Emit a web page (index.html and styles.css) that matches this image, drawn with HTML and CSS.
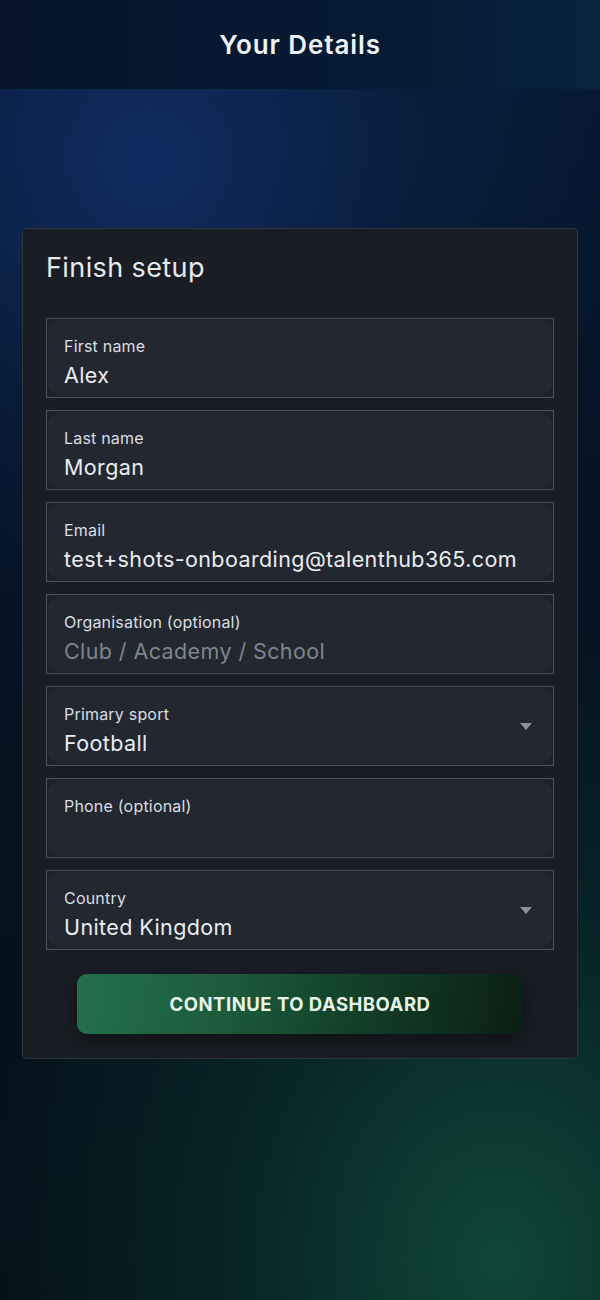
FILE: index.html
```html
<!DOCTYPE html>
<html lang="en">
<head>
<meta charset="utf-8">
<title>Your Details</title>
<link rel="stylesheet" href="styles.css">
</head>
<body>
<div class="page">
  <header class="topbar"><h1>Your Details</h1></header>
  <main class="content">
    <section class="card">
      <h2 class="card-title">Finish setup</h2>
      <div class="fields">
        <div class="field"><div class="field-inner"><span class="label">First name</span><span class="value">Alex</span></div></div>
        <div class="field"><div class="field-inner"><span class="label">Last name</span><span class="value">Morgan</span></div></div>
        <div class="field"><div class="field-inner"><span class="label">Email</span><span class="value">test+shots-onboarding@talenthub365.com</span></div></div>
        <div class="field"><div class="field-inner"><span class="label">Organisation (optional)</span><span class="value placeholder">Club / Academy / School</span></div></div>
        <div class="field select"><div class="field-inner"><span class="label">Primary sport</span><span class="value">Football</span><span class="caret"></span></div></div>
        <div class="field"><div class="field-inner"><span class="label">Phone (optional)</span><span class="value"></span></div></div>
        <div class="field select"><div class="field-inner"><span class="label">Country</span><span class="value">United Kingdom</span><span class="caret"></span></div></div>
      </div>
      <button class="cta">CONTINUE TO DASHBOARD</button>
    </section>
  </main>
</div>
</body>
</html>
```
FILE: styles.css
```css
* { box-sizing: border-box; }
html, body { margin: 0; padding: 0; }
body {
  width: 600px;
  height: 1300px;
  font-family: "Inter", "Noto Sans", sans-serif;
  color: #e9edf2;
  background: #04111c;
  overflow: hidden;
}
.page {
  position: relative;
  height: 1300px;
  background:
    radial-gradient(ellipse 520px 640px at 500px 1260px, rgba(18, 76, 60, 0.9), rgba(12, 56, 50, 0.5) 50%, rgba(4, 17, 28, 0) 100%),
    radial-gradient(ellipse 480px 480px at 150px 160px, rgba(16, 45, 100, 0.95), rgba(12, 35, 75, 0.5) 55%, rgba(4, 17, 28, 0) 100%),
    linear-gradient(180deg, #071a33 0%, #051424 40%, #041119 100%);
}
.topbar {
  height: 89px;
  display: flex;
  align-items: center;
  justify-content: center;
  background: linear-gradient(90deg, #06152a 0%, #061a33 60%, #082340 100%);
}
.topbar h1 {
  margin: 0;
  font-size: 26px;
  font-weight: 600;
  letter-spacing: 0.9px;
  color: #eef2f6;
}
.content {
  padding: 139px 22px 0;
}
.card {
  background: #1a1d24;
  border: 1px solid #2f3540;
  border-radius: 5px;
  padding: 22px 23px 24px;
}
.card-title {
  margin: 0 0 33px;
  font-size: 27px;
  line-height: 34px;
  font-weight: 400;
  letter-spacing: 0.4px;
  color: #e6eaef;
}
.fields {
  display: flex;
  flex-direction: column;
  gap: 12px;
}
.field {
  height: 80px;
  border: 1px solid #4c535e;
  background: #1d2027;
  padding: 1px;
}
.field-inner {
  position: relative;
  height: 100%;
  background: #23272f;
  border-radius: 14px;
  padding: 16px 16px 0;
  display: flex;
  flex-direction: column;
}
.label {
  font-size: 16px;
  line-height: 20px;
  letter-spacing: 0.2px;
  color: #d9dee4;
}
.value {
  margin-top: 5px;
  font-size: 21.5px;
  line-height: 28px;
  letter-spacing: 0.4px;
  color: #e9edf2;
}
.placeholder { color: #7f858e; }
.caret {
  position: absolute;
  right: 20px;
  top: 35px;
  width: 0;
  height: 0;
  border-left: 6px solid transparent;
  border-right: 6px solid transparent;
  border-top: 7px solid #8b9098;
}
.cta {
  display: block;
  width: 446px;
  height: 60px;
  margin: 24px auto 0;
  border: none;
  border-radius: 10px;
  background: linear-gradient(100deg, #24704a 0%, #1b5a3a 35%, #123d27 65%, #0b1f13 100%);
  box-shadow: 0 6px 18px rgba(0, 0, 0, 0.45);
  color: #e6f4ea;
  font-family: "Inter", "Noto Sans", sans-serif;
  font-size: 18.5px;
  font-weight: 700;
  letter-spacing: 0.5px;
}
```
